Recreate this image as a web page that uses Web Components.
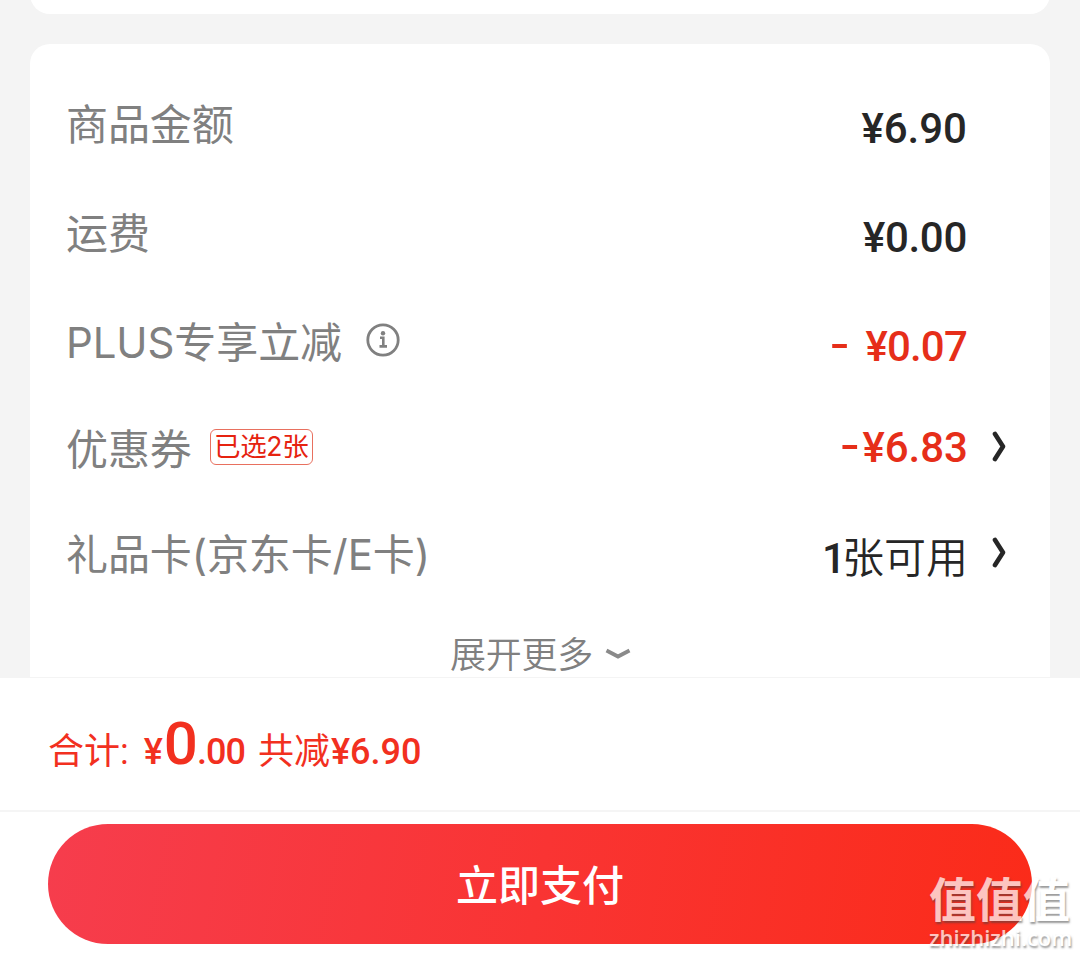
<!DOCTYPE html>
<html lang="zh-CN">
<head>
<meta charset="utf-8">
<title>收银台</title>
<style>
body {
  margin: 0;
  background: #f4f4f4;
  font-family: Inter, "Noto Sans CJK SC", sans-serif;
}
</style>
</head>
<body>
<checkout-page>
  <price-row label="商品金额" value="¥6.90" style="--shift: 9px"></price-row>
  <price-row label="运费" value="¥0.00" style="--shift: 8px; --value-space: -0.3px"></price-row>
  <price-row label="PLUS专享立减" sign="18px" value="¥0.07" class="red" style="--shift: 8px; --value-space: -0.8px">
    <info-icon></info-icon>
  </price-row>
  <price-row label="优惠券" sign="4px" value="¥6.83" class="red" arrow style="--height: 105px; --value-right: -1px">
    <coupon-tag>已选2张</coupon-tag>
  </price-row>
  <price-row label="礼品卡(京东卡/E卡)" value="1" unit="张可用" arrow style="--height: 106px; --shift: 7px; --arrow-shift: 1px; --value-space: -4px; --value-right: -1px"></price-row>
  <more-toggle slot="more">展开更多</more-toggle>
  <total-bar slot="total"></total-bar>
  <pay-button slot="pay">立即支付</pay-button>
</checkout-page>
<site-mark></site-mark>

<script>
class CheckoutPage extends HTMLElement {
  connectedCallback() {
    this.attachShadow({mode: 'open'}).innerHTML = `
    <style>
    :host {
      display: flex;
      flex-direction: column;
      height: 956px;
      overflow: hidden;
    }
    .prev, .card {
      margin: 0 30px;
      background: #fff;
      box-sizing: border-box;
      flex: none;
    }
    .prev {
      height: 14px;
      overflow: hidden;
      background: #f4f4f4;
    }
    .prev::before {
      content: "";
      display: block;
      height: 40px;
      margin-top: -26px;
      border-radius: 20px;
      background: #fff;
    }
    .card {
      margin-top: 30px;
      height: 633px;
      padding: 26px 37px 0 36px;
      border-radius: 20px 20px 0 0;
    }
    .footer {
      flex: 1;
      background: #fff;
      border-top: 1px solid #f4f4f4;
    }
    </style>
    <div class="prev"></div>
    <div class="card">
      <slot></slot>
      <slot name="more"></slot>
    </div>
    <div class="footer">
      <slot name="total"></slot>
      <slot name="pay"></slot>
    </div>
    `
  }
}

class PriceRow extends HTMLElement {
  connectedCallback() {
    const arrow = this.hasAttribute('arrow') ? `
      <svg width="18" height="32" viewBox="0 0 18 32">
        <path d="M4 3 L12 15.5 L4 28" fill="none" stroke="#262626" stroke-width="4.6" stroke-linecap="round" stroke-linejoin="round"/>
      </svg>` : '';
    const sign = this.hasAttribute('sign')
      ? `<span class="sign" style="margin-right: ${this.getAttribute('sign')}">-</span>` : '';
    const unit = this.hasAttribute('unit')
      ? `<span class="unit">${this.getAttribute('unit')}</span>` : '';
    this.attachShadow({mode: 'open'}).innerHTML = `
    <style>
    :host {
      display: flex;
      align-items: center;
      height: var(--height, 109px);
      color: #262626;
    }
    :host(.red) {
      color: #e62e19;
    }
    .label {
      color: #808080;
      font-size: 42px;
      font-weight: 400;
      line-height: 60px;
      white-space: nowrap;
      letter-spacing: -0.1px;
    }
    .value {
      margin-left: auto;
      margin-right: var(--value-right, 0);
      padding-top: var(--shift, 0);
      font: 500 42px/60px Roboto, "Noto Sans CJK SC", sans-serif;
      letter-spacing: var(--value-space, 0);
      white-space: nowrap;
    }
    :host([sign="4px"]) .value {
      padding: 0 0 3px;
    }
    .sign {
      display: inline-block;
      width: 16px;
      transform: translateY(-2px) scaleX(1.35);
      text-align: center;
    }
    .unit {
      font-weight: 350;
      letter-spacing: 0;
    }
    .arrow {
      width: 46px;
      flex: none;
      box-sizing: border-box;
      padding-left: 24px;
      margin-top: calc(var(--arrow-shift, 0px) - 6px);
    }
    svg {
      display: block;
    }
    </style>
    <span class="label">${this.getAttribute('label')}</span>
    <slot></slot>
    <span class="value">${sign}${this.getAttribute('value')}${unit}</span>
    <span class="arrow">${arrow}</span>
    `
  }
}

class InfoIcon extends HTMLElement {
  connectedCallback() {
    this.attachShadow({mode: 'open'}).innerHTML = `
    <style>
    :host {
      display: block;
      margin: -5px 0 0 24px;
    }
    svg {
      display: block;
    }
    </style>
    <svg width="34" height="34" viewBox="0 0 34 34" fill="none" stroke="#808080">
      <circle cx="17" cy="17" r="15.2" stroke-width="2.8"/>
      <circle cx="17" cy="10.2" r="2.2" fill="#808080" stroke="none"/>
      <path d="M14 14.8H17.3V23M13.5 23.4H21" stroke-width="2.6"/>
    </svg>
    `
  }
}

class CouponTag extends HTMLElement {
  connectedCallback() {
    this.attachShadow({mode: 'open'}).innerHTML = `
    <style>
    :host {
      display: flex;
      justify-content: center;
      box-sizing: border-box;
      width: 103px;
      height: 36px;
      margin: -5px 0 0 18px;
      border: 1px solid #e8705f;
      border-radius: 6px;
      color: #e62310;
      font: 400 26.5px/33px Inter, "Noto Sans CJK SC", sans-serif;
      letter-spacing: -0.3px;
      white-space: nowrap;
    }
    </style>
    <slot></slot>
    `
  }
}

class MoreToggle extends HTMLElement {
  connectedCallback() {
    this.attachShadow({mode: 'open'}).innerHTML = `
    <style>
    :host {
      display: flex;
      align-items: center;
      justify-content: center;
      gap: 12px;
      height: 48px;
      padding: 23px 0 0 2px;
      color: #808080;
      font-size: 36px;
      font-weight: 350;
      line-height: 48px;
      letter-spacing: -0.2px;
    }
    svg {
      margin-top: -2px;
    }
    </style>
    <slot></slot>
    <svg width="26" height="14" viewBox="0 0 26 14">
      <path d="M1.5 3.5 L13 9.5 L24.5 3.5" fill="none" stroke="#8a8a8a" stroke-width="3.8"/>
    </svg>
    `
  }
}

class TotalBar extends HTMLElement {
  connectedCallback() {
    this.attachShadow({mode: 'open'}).innerHTML = `
    <style>
    :host {
      display: flex;
      align-items: baseline;
      box-sizing: border-box;
      height: 134px;
      padding: 31px 48px 0;
      border-bottom: 2px solid #f5f5f5;
      color: #f2301f;
      font: 500 36px/70px Roboto, "Noto Sans CJK SC", sans-serif;
      white-space: nowrap;
    }
    .cn {
      font-weight: 400;
    }
    .price {
      margin-left: 15px;
    }
    .big {
      margin: 0 -1px 0 1px;
      font-size: 60px;
    }
    .cents {
      letter-spacing: -1px;
    }
    .off {
      margin-left: 13px;
    }
    .cut {
      margin-left: 1px;
    }
    </style>
    <span class="cn">合计:</span>
    <span class="price">¥<span class="big">0</span><span class="cents">.00</span></span>
    <span class="cn off">共减</span>
    <span class="cut">¥6.90</span>
    `
  }
}

class PayButton extends HTMLElement {
  connectedCallback() {
    this.attachShadow({mode: 'open'}).innerHTML = `
    <style>
    :host {
      display: block;
      height: 120px;
      margin: 12px 48px 0;
      border-radius: 60px;
      background: linear-gradient(100deg, #f63d4d, #f93433 50%, #fb2b19);
      color: #fff;
      font-size: 42px;
      font-weight: 500;
      line-height: 123px;
      text-align: center;
    }
    </style>
    <slot></slot>
    `
  }
}

// translucent stamp floating above the bottom right corner
class SiteMark extends HTMLElement {
  connectedCallback() {
    this.attachShadow({mode: 'open'}).innerHTML = `
    <style>
    :host {
      position: absolute;
      left: 929px;
      top: 872px;
      width: 143px;
      color: #fff;
      opacity: .72;
      text-shadow: 1px 2px 2px rgba(70, 70, 70, .75);
      white-space: nowrap;
    }
    .name {
      height: 54px;
      font: 700 47px/50px "Noto Sans CJK SC", sans-serif;
    }
    .url {
      font: 600 22px/22px "Open Sans", sans-serif;
    }
    </style>
    <div class="name">值值值</div>
    <div class="url">zhizhizhi.com</div>
    `
  }
}

customElements.define('checkout-page', CheckoutPage);
customElements.define('price-row', PriceRow);
customElements.define('info-icon', InfoIcon);
customElements.define('coupon-tag', CouponTag);
customElements.define('more-toggle', MoreToggle);
customElements.define('total-bar', TotalBar);
customElements.define('pay-button', PayButton);
customElements.define('site-mark', SiteMark);
</script>
</body>
</html>
